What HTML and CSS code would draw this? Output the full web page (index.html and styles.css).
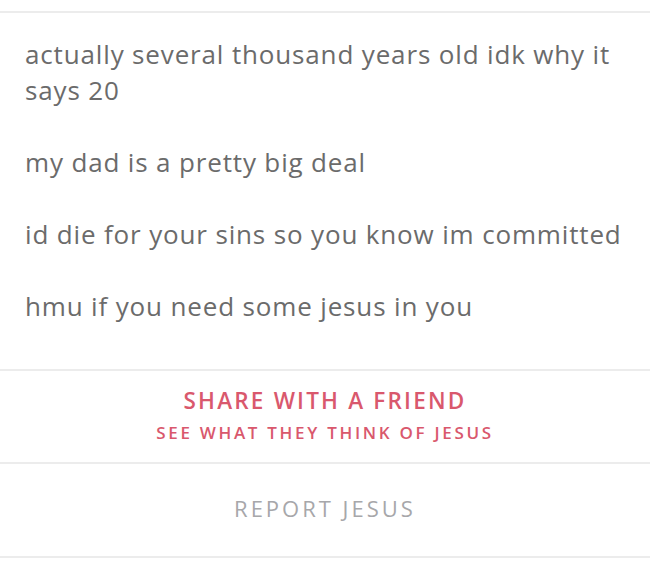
FILE: index.html
```html
<!DOCTYPE html>
<html lang="en">
<head>
    <meta charset="UTF-8">
    <meta name="viewport" content="width=device-width, initial-scale=1.0">
    <title>Profile</title>
    <link rel="stylesheet" href="styles.css">
</head>
<body>

    <div class="profile">
        <!-- Bio -->
        <div class="bio">
            <p>actually several thousand years old idk why it says 20</p>
            <p>my dad is a pretty big deal</p>
            <p>id die for your sins so you know im committed</p>
            <p>hmu if you need some jesus in you</p>
        </div>

        <!-- Share -->
        <div class="share">
            <div class="share-title">SHARE WITH A FRIEND</div>
            <div class="share-sub">SEE WHAT THEY THINK OF JESUS</div>
        </div>

        <!-- Report -->
        <div class="report">REPORT JESUS</div>
    </div>

</body>
</html>
```

FILE: styles.css
```css
body {
    font-family: "Open Sans", Arial, sans-serif;
    margin: 0;
    padding: 0;
    background-color: #fff;
}

.profile {
    margin-top: 11px;
    border-top: 2px solid #ececec;
    border-bottom: 2px solid #ececec;
}

.bio {
    padding: 23px 25px 45px;
    color: #6b6b6b;
    font-size: 26px;
    letter-spacing: 0.85px;
    line-height: 36px;
}

.bio p {
    margin: 0 0 36px;
}

.bio p:last-child {
    margin-bottom: 0;
}

.share {
    border-top: 2px solid #ececec;
    padding: 15px 0 14px;
    text-align: center;
    color: #d9586d;
    font-weight: 600;
}

.share-title {
    font-size: 22.5px;
    letter-spacing: 2.2px;
    line-height: 30px;
}

.share-sub {
    margin-top: 2px;
    font-size: 17px;
    letter-spacing: 2.7px;
    line-height: 30px;
}

.report {
    border-top: 2px solid #ececec;
    padding: 27px 0 31px;
    text-align: center;
    color: #a7a7aa;
    font-size: 22px;
    font-weight: 500;
    letter-spacing: 3px;
    line-height: 34px;
}
```
